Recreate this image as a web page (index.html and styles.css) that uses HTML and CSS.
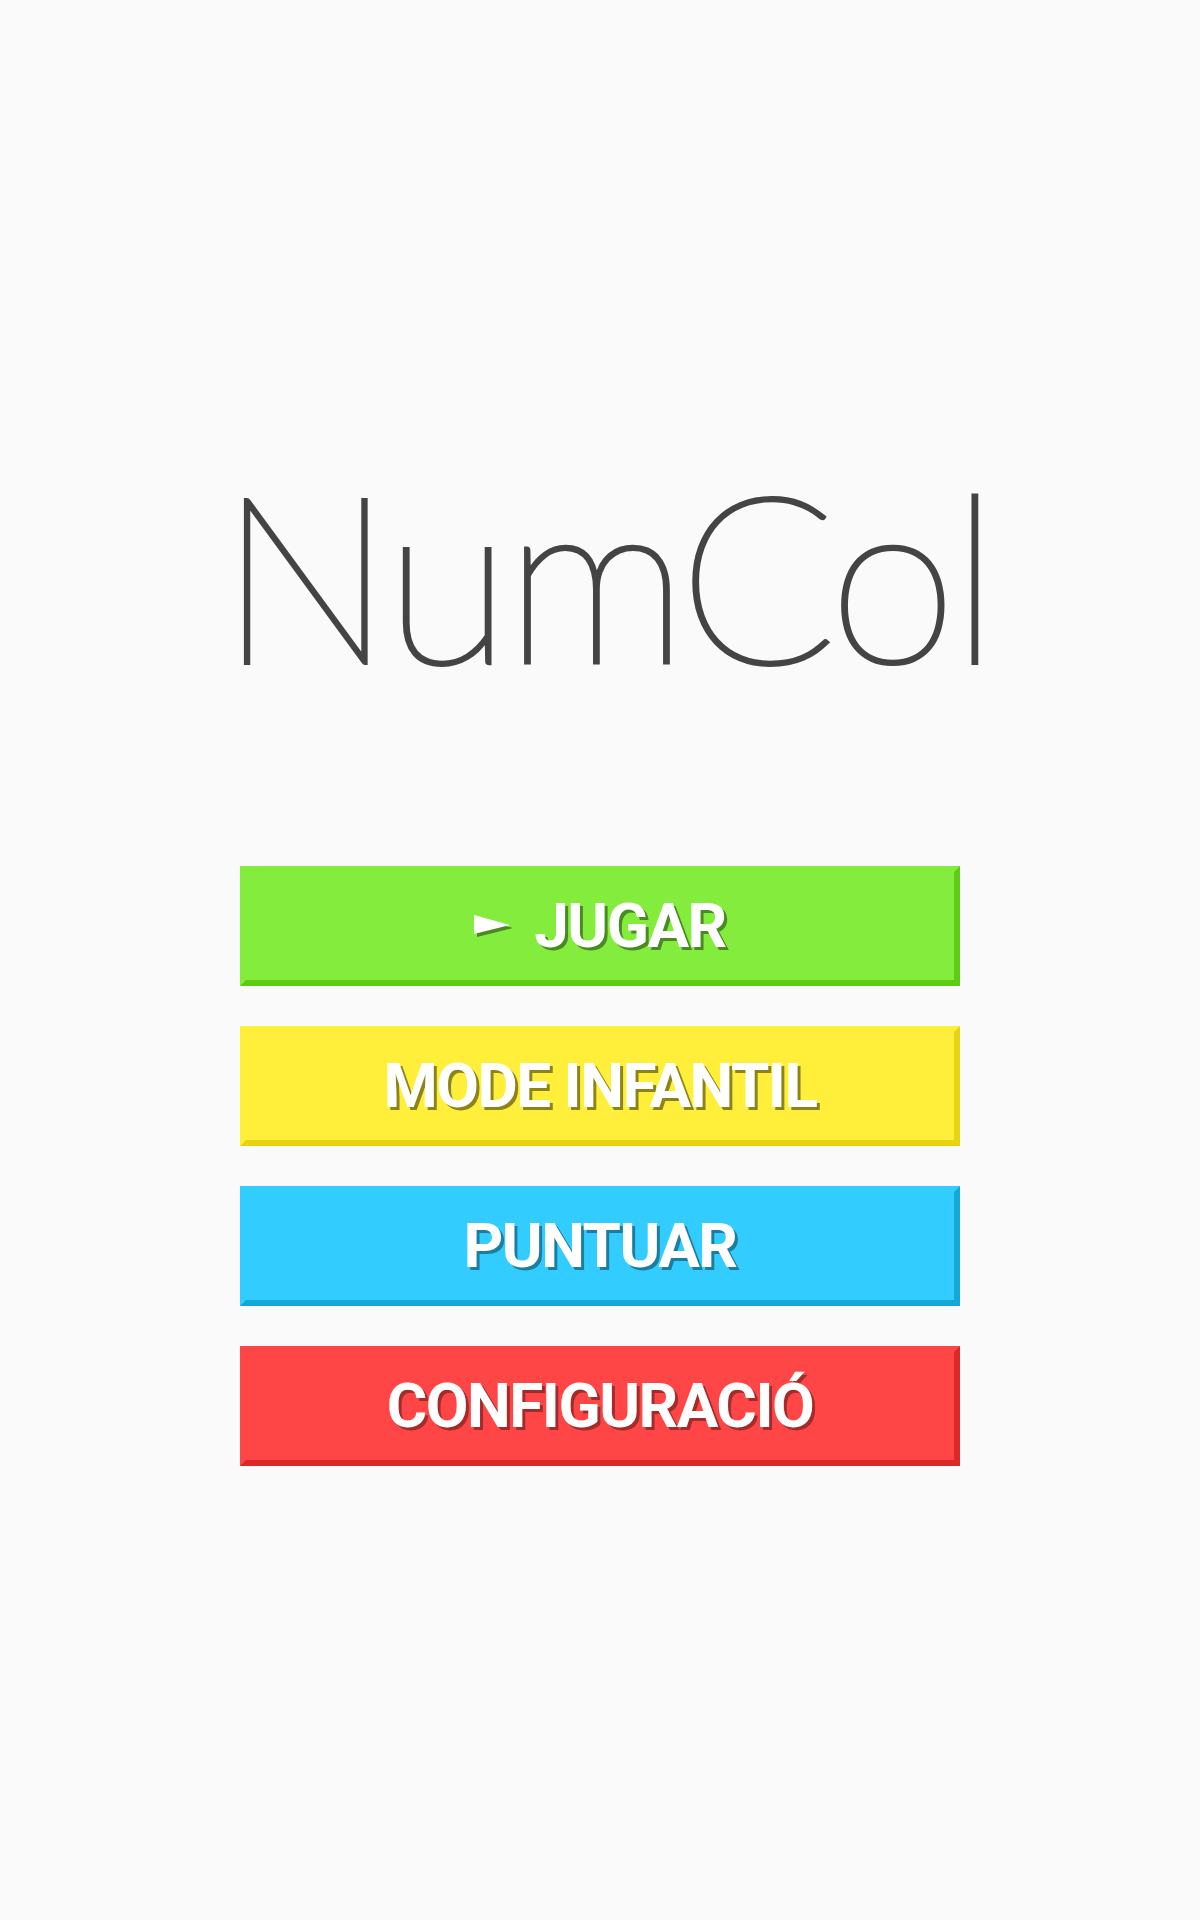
FILE: index.html
```html
<!DOCTYPE html>
<html lang="ca">
<head>
<meta charset="utf-8">
<title>NumCol</title>
<link rel="stylesheet" href="styles.css">
</head>
<body>
<main class="screen">
  <h1 class="title">NumCol</h1>
  <nav class="menu">
    <button class="btn btn-green">
      <svg class="play" width="40" height="22" viewBox="0 0 40 22" aria-hidden="true">
        <polygon points="3,3 39,13 3,22" fill="#4a8a22"/>
        <polygon points="0,0 36,10 0,19" fill="#ffffff"/>
      </svg>
      <span>JUGAR</span>
    </button>
    <button class="btn btn-yellow"><span>MODE INFANTIL</span></button>
    <button class="btn btn-blue"><span>PUNTUAR</span></button>
    <button class="btn btn-red"><span>CONFIGURACIÓ</span></button>
  </nav>
</main>
</body>
</html>
```
FILE: styles.css
```css
html, body {
  margin: 0;
  padding: 0;
  background: #fafafa;
}
.screen {
  width: 1200px;
  height: 1920px;
  display: flex;
  flex-direction: column;
  align-items: center;
}
.title {
  margin: 457px 0 0 12px;
  font-family: "Lato", "DejaVu Sans", sans-serif;
  font-weight: 100;
  font-size: 232px;
  line-height: 1;
  color: #444444;
  -webkit-text-stroke: 4px #444444;
  letter-spacing: -6px;
}
.menu {
  margin-top: 177px;
  display: flex;
  flex-direction: column;
  gap: 40px;
}
.btn {
  width: 720px;
  height: 120px;
  box-sizing: border-box;
  border: 6px solid;
  padding: 0;
  display: flex;
  align-items: center;
  justify-content: center;
  gap: 20px;
  font-family: "Roboto", "Liberation Sans", sans-serif;
  font-weight: 700;
  font-size: 62px;
  letter-spacing: -1.5px;
  color: #ffffff;
  cursor: pointer;
}
.btn span { line-height: 1; }
.btn-green {
  background: #84ec3c;
  border-color: #84ec3c #5ecc14 #5ecc14 #84ec3c;
  text-shadow: 3px 3px 0 #4a8a22;
}
.btn-yellow {
  background: #ffef3a;
  border-color: #ffef3a #e6d411 #e6d411 #ffef3a;
  text-shadow: 3px 3px 0 #8c8418;
}
.btn-blue {
  background: #33ccff;
  border-color: #33ccff #14a8d4 #14a8d4 #33ccff;
  text-shadow: 3px 3px 0 #1b7ea0;
}
.btn-red {
  background: #ff4646;
  border-color: #ff4646 #db2828 #db2828 #ff4646;
  text-shadow: 3px 3px 0 #a52a2a;
}
.play { display: block; }
```
